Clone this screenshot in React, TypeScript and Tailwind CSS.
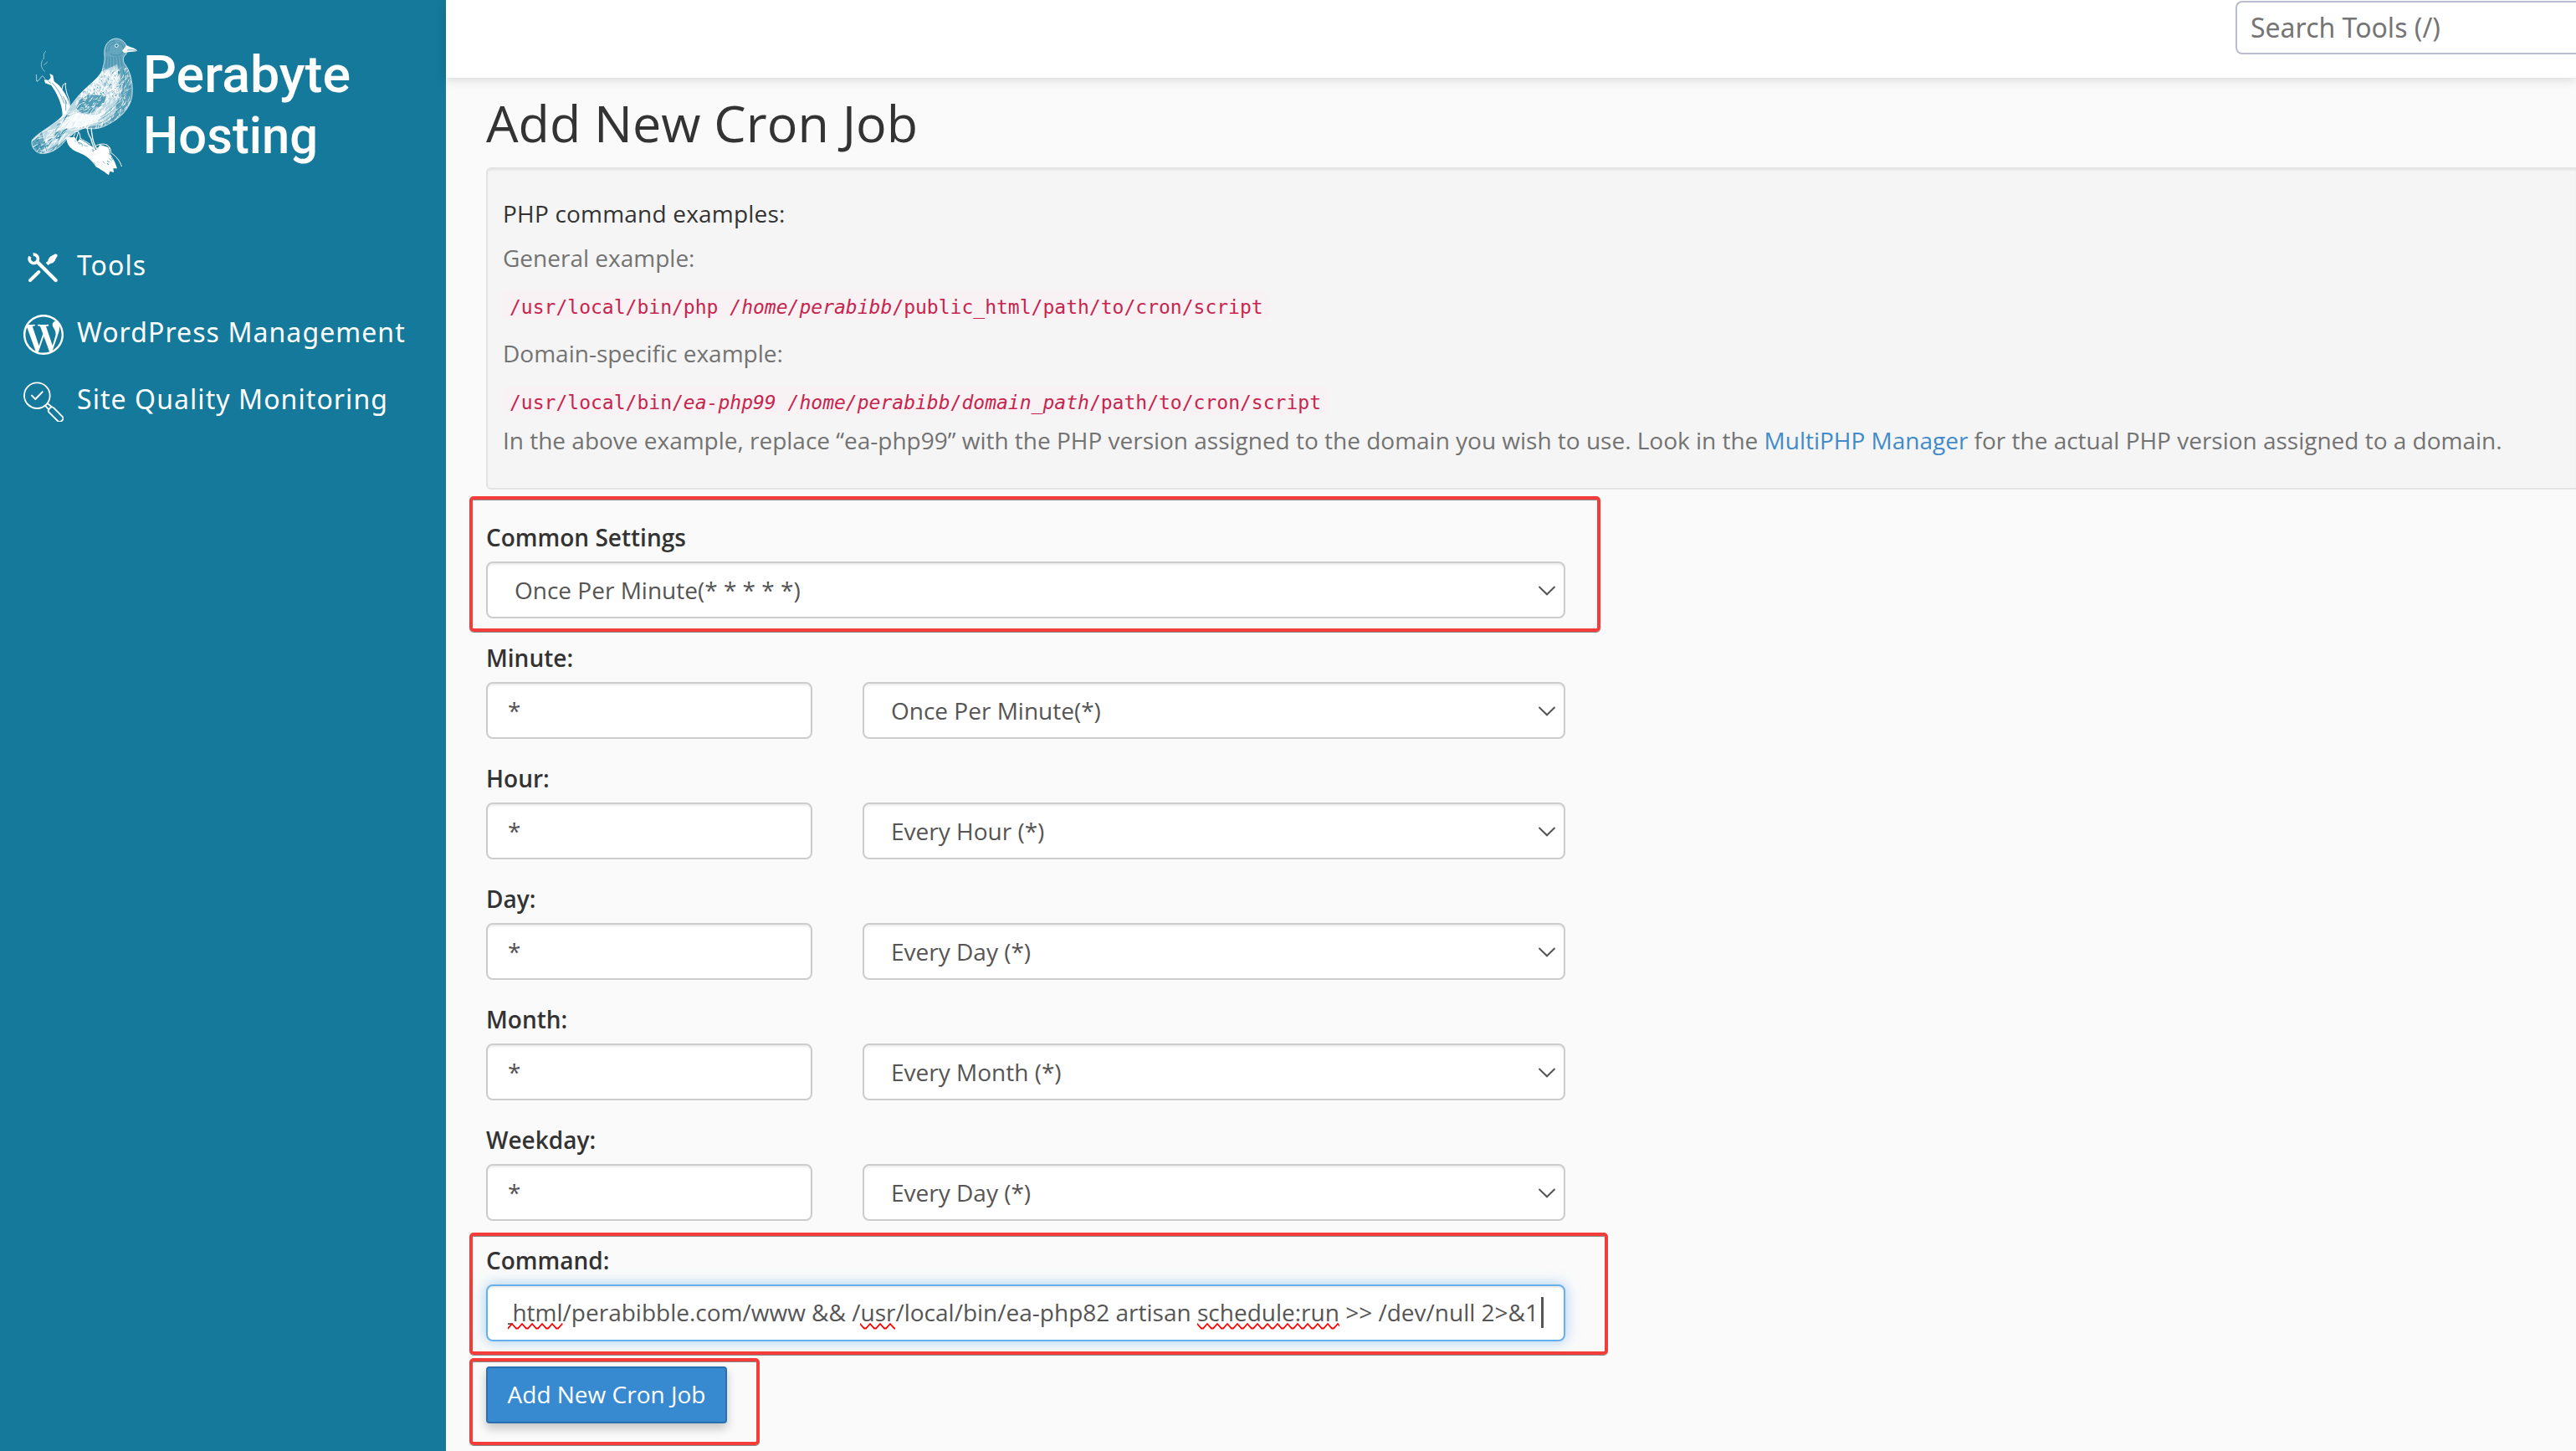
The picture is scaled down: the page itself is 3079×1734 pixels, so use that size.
import type { ReactNode } from "react";
import { SiWordpress } from "react-icons/si";

const BODY =
  "M285 82 C279 44 300 18 328 18 C348 20 360 33 365 47 L363 74 C351 82 350 94 355 106 C376 132 388 172 384 220 C378 270 340 306 290 330 C268 342 240 344 215 339 C190 345 160 365 135 395 C112 420 80 433 55 430 C34 425 21 405 24 385 C35 363 90 337 130 300 C150 275 170 250 190 225 C215 195 260 165 276 135 C280 115 287 100 285 82 Z";
const LOWER_BRANCH =
  "M148 372 C148 398 165 418 190 426 C220 436 240 456 254 478 L282 494 L300 508 L304 494 L318 498 L316 484 L330 484 L322 462 C312 440 304 436 298 408 L268 398 C262 412 256 420 250 418 C244 402 232 404 222 394 L196 378 L188 388 L178 372 Z";
const UPPER_BRANCH =
  "M72 178 L68 164 L84 168 L92 158 L88 144 L100 150 L104 172 L122 186 C143 212 157 236 160 264 L148 288 L134 296 C134 262 122 234 108 208 L94 186 Z";

type Stroke = { d: string; w: number };

function makeRandom(seed: number) {
  let s = seed;
  return () => {
    s = (s * 1664525 + 1013904223) % 4294967296;
    return s / 4294967296;
  };
}

/* Short feather strokes scattered over a rectangle, following one direction. */
function hatch(
  seed: number,
  count: number,
  box: [number, number, number, number],
  angle: number,
  length: number,
): Stroke[] {
  const rnd = makeRandom(seed);
  return Array.from({ length: count }, () => {
    const x = box[0] + rnd() * box[2];
    const y = box[1] + rnd() * box[3];
    const a = angle + (rnd() - 0.5) * 0.9;
    const l = length * (0.4 + rnd());
    const dx = Math.cos(a) * l;
    const dy = Math.sin(a) * l;
    const bend = (rnd() - 0.5) * 6;
    return {
      d: `M${x.toFixed(1)} ${y.toFixed(1)} q${(dx / 2 + bend).toFixed(1)} ${(dy / 2 + bend).toFixed(1)} ${dx.toFixed(1)} ${dy.toFixed(1)}`,
      w: 1.4 + rnd() * 1.8,
    };
  });
}

const chest = hatch(7, 420, [180, 120, 200, 220], 2.2, 15);
const speckle = hatch(19, 420, [200, 130, 140, 100], 1.4, 8);
const tail = hatch(31, 260, [20, 270, 220, 160], 2.45, 24);
const bark = hatch(43, 70, [140, 370, 200, 140], 0.7, 8);

function Strokes({ items, color }: { items: Stroke[]; color: string }) {
  return (
    <g fill="none" stroke={color} strokeLinecap="round">
      {items.map((s, i) => (
        <path key={i} d={s.d} strokeWidth={s.w} />
      ))}
    </g>
  );
}

function Bird() {
  const teal = "#14799b";
  return (
    <svg viewBox="0 0 420 525" className="h-[175px] w-[140px] shrink-0" aria-hidden="true">
      <defs>
        <clipPath id="body">
          <path d={BODY} />
        </clipPath>
        <clipPath id="lower">
          <path d={LOWER_BRANCH} />
        </clipPath>
      </defs>
      <g fill="none" stroke="#fff" strokeLinecap="round">
        <path d="M74 64 C62 74 70 82 66 92 M62 96 C54 112 58 124 70 136 M68 112 C74 108 78 106 80 102" strokeWidth="2" opacity=".8" />
        <path d="M40 148 C42 158 40 166 42 172 C52 170 54 156 62 152 L72 162" strokeWidth="2" />
        <path d="M132 200 L136 184 L146 178 C142 190 148 204 150 216 C158 232 160 246 160 262" strokeWidth="3" />
        <path d="M292 400 C304 404 308 416 308 428 C326 440 340 456 346 476" strokeWidth="3" />
      </g>
      <path d={UPPER_BRANCH} fill="#fff" />
      <g fill="none" stroke={teal} strokeWidth="1.800" strokeLinecap="round">
        <path d="M98 178 C116 196 130 222 140 250 M136 226 L150 252 M146 240 L146 276 M84 172 L92 178" />
      </g>
      <path d={LOWER_BRANCH} fill="#fff" />
      <g clipPath="url(#lower)">
        <Strokes items={bark} color={teal} />
        <path d="M160 385 C190 425 240 420 270 470 L300 495" fill="none" stroke="#fff" strokeWidth="26" opacity=".9" />
      </g>
      <path d="M178 352 C190 346 198 356 198 378 M180 358 L166 386 M192 352 L182 382 M196 374 C208 384 222 388 234 398" fill="none" stroke="#fff" strokeWidth="3" />
      <path d="M222 336 C224 352 228 366 236 376 C240 396 248 414 260 434 M238 338 C236 352 242 364 242 376 C246 396 254 412 268 430" fill="none" stroke="#fff" strokeWidth="4" />
      <path d="M252 404 C266 394 286 394 298 402 C304 410 304 420 300 430 M256 412 C272 406 284 414 290 424" fill="none" stroke="#fff" strokeWidth="3" />
      <g clipPath="url(#body)">
        <path d={BODY} fill="#fff" fillOpacity=".35" />
        <path d="M278 135 C230 180 200 210 172 250 L120 310 L60 350 L70 425 L150 375 L220 336 L300 320 C340 260 340 160 330 110 Z" fill="#fff" fillOpacity=".55" />
        <Strokes items={chest} color="#fff" />
        <Strokes items={hatch(57, 110, [190, 130, 150, 100], 2, 7)} color={teal} />
        <Strokes items={speckle} color="#fff" />
        <path d="M196 238 C220 215 250 218 290 226 C290 246 268 266 240 284 C216 292 192 286 184 266 Z" fill={teal} fillOpacity=".65" />
        <Strokes items={hatch(71, 70, [185, 220, 100, 65], 2.5, 9)} color="#fff" />
        <Strokes items={tail} color="#fff" />
        <Strokes items={hatch(83, 60, [30, 290, 170, 130], 2.4, 22)} color={teal} />
        <path d="M188 284 C220 296 262 294 290 280 L262 318 L200 336 L150 340 L110 352 L150 300 Z" fill="#fff" fillOpacity=".8" />
        <g fill="none" stroke={teal} strokeWidth="1.800" opacity=".8">
          <path d="M372 150 C384 210 360 280 262 324 M362 140 C376 200 350 268 262 312 M352 130 C366 190 342 256 270 300 M378 190 C376 250 340 300 280 326" />
          <path d="M286 84 L280 130 M294 82 L290 124 M303 84 L300 122 M312 84 L312 120 M322 84 L324 118 M332 82 L336 116 M342 80 L348 118" />
          <path d="M292 66 C288 46 300 28 322 26 M300 64 C298 48 308 36 326 34 M306 72 C322 84 344 78 352 66 M336 34 C348 38 354 48 354 60" />
          <path d="M30 384 C42 398 42 416 50 428 M40 376 C54 390 56 410 64 428 M34 402 L60 426 M60 362 L78 424" />
        </g>
      </g>
      <path d={BODY} fill="none" stroke="#fff" strokeWidth="2.500" opacity=".85" />
      <path d="M364 42 C378 50 396 52 402 62 C392 66 376 64 356 70 L348 62 Z" fill="#fff" />
      <path d="M366 60 C380 58 390 60 398 61" fill="none" stroke={teal} strokeWidth="2" />
      <circle cx="328" cy="44" r="5.500" fill={teal} stroke="#fff" strokeWidth="3" />
    </svg>
  );
}

function ToolsIcon() {
  return (
    <svg viewBox="0 0 144 144" className="size-12" fill="none" stroke="#fff" aria-hidden="true">
      <path d="M23.500 32 A15.500 15.500 0 1 0 35 24.500" strokeWidth="11" />
      <path d="M50 51 L116 117" strokeWidth="13" strokeLinecap="round" />
      <path d="M24 117 L55 87" strokeWidth="12" strokeLinecap="round" />
      <path d="M80 54 L89 63 L96 57 C106 57 113 49 116 40 L122 29 C122 24 118 21 112 23 L98 31 C92 36 88 42 88 48 Z" fill="#fff" stroke="none" />
    </svg>
  );
}

function QualityIcon() {
  return (
    <svg viewBox="0 0 144 144" className="size-12" fill="none" stroke="#fff" strokeWidth="5.500" aria-hidden="true">
      <circle cx="49" cy="50" r="46" />
      <path d="M30 50 L43 63 L68 37" strokeWidth="6" strokeLinecap="round" strokeLinejoin="round" />
      <path d="M78 86 L92 102 M86 78 L103 92" />
      <rect x="-31" y="-11.500" width="62" height="23" rx="9" transform="translate(116 118) rotate(45)" />
    </svg>
  );
}

function NavItem({ icon, label }: { icon: ReactNode; label: string }) {
  return (
    <a className="flex h-20 items-center gap-4 pl-7 font-['Noto_Sans'] text-[32px] tracking-[1.070px] text-white">
      <span className="mt-[5px] size-12 shrink-0">{icon}</span>
      <span className="whitespace-nowrap">{label}</span>
    </a>
  );
}

function Highlight({ className }: { className: string }) {
  return (
    <div
      className={
        "pointer-events-none absolute rounded-[5px] border-4 border-[#f43c3b] shadow-[0_1px_0_#8a8a8a,inset_0_1px_0_#8a8a8a] " +
        className
      }
    />
  );
}

function Select({ value }: { value: string }) {
  return (
    <div className="flex h-[68px] flex-1 items-center justify-between rounded-lg border-2 border-[#ccc] bg-white pr-[9px] pl-8 text-[#555] shadow-[inset_0_2px_2px_rgba(0,0,0,0.075)]">
      <span>{value}</span>
      <svg viewBox="0 0 22 14" className="mt-0.5 h-[14px] w-[22px]" fill="none" stroke="#555" strokeWidth="2" aria-hidden="true">
        <path d="M1.500 2 L11 11.300 L20.500 2" />
      </svg>
    </div>
  );
}

function Label({ children }: { children: ReactNode }) {
  return <div className="mb-[9px] h-10 leading-10 font-semibold text-[#333]">{children}</div>;
}

function TimeField({ label, value }: { label: string; value: string }) {
  return (
    <div className="mb-[26px] pt-px">
      <Label>{label}</Label>
      <div className="flex gap-[60px]">
        <div className="flex h-[68px] w-[390px] items-center rounded-lg border-2 border-[#ccc] bg-white px-6 text-[#555] shadow-[inset_0_2px_2px_rgba(0,0,0,0.075)]">
          *
        </div>
        <Select value={value} />
      </div>
    </div>
  );
}

function Misspelled({ id, children }: { id: string; children: ReactNode }) {
  return (
    <span className="relative">
      {children}
      <svg className="absolute -bottom-[2px] left-0 h-2 w-full" aria-hidden="true">
        <defs>
          <pattern id={id} width="12" height="8" patternUnits="userSpaceOnUse">
            <path d="M-1 0 L0 1 L5 6.500 H7 L12 1 L13 0" fill="none" stroke="#f00" strokeWidth="1.800" />
          </pattern>
        </defs>
        <rect width="100%" height="8" fill={`url(#${id})`} />
      </svg>
    </span>
  );
}

function Code({ children }: { children: ReactNode }) {
  return (
    <code className="block h-[34px] w-fit rounded-lg bg-[#f9f2f4] px-2 font-['DejaVu_Sans_Mono'] text-[23.02px] leading-[38px] whitespace-pre text-[#c7254e]">
      {children}
    </code>
  );
}

export default function App() {
  return (
    <div className="flex h-[1734px] w-[3079px] overflow-hidden bg-[#fafafa] font-['Open_Sans',sans-serif] text-[28px] leading-10">
      <aside className="w-[533px] shrink-0 bg-[#14799b]">
        <div className="flex h-[277px] items-start pt-10 pl-[30px]">
          <Bird />
          <svg viewBox="0 0 260 175" className="h-[175px] w-[260px]" fill="#fff" fontFamily="Roboto" fontSize="60.500" fontWeight="500">
            <text x="1" y="70" textLength="248" lengthAdjust="spacingAndGlyphs">Perabyte</text>
            <text x="1" y="142.500" textLength="209" lengthAdjust="spacingAndGlyphs">Hosting</text>
          </svg>
        </div>
        <nav>
          <NavItem icon={<ToolsIcon />} label="Tools" />
          <NavItem icon={<SiWordpress className="size-12" />} label="WordPress Management" />
          <NavItem icon={<QualityIcon />} label="Site Quality Monitoring" />
        </nav>
      </aside>

      <div className="flex min-w-0 flex-1 flex-col">
        <header className="flex h-[93px] shrink-0 items-start justify-end bg-white pt-px shadow-[0_2px_12px_rgba(0,0,0,0.15)]">
          <div className="flex h-16 w-[407px] items-center rounded-l-lg border-2 border-r-0 border-[#babdcd] pl-4 font-['Noto_Sans'] text-[32px] text-[#757575]">
            Search Tools (/)
          </div>
        </header>

        <main className="pt-[14px] pl-12">
          <h1 className="mb-[13px] h-20 text-[61px] leading-[80px] text-[#333]">Add New Cron Job</h1>

          <section className="mb-9 h-[385px] rounded-l-md border-2 border-r-0 border-[#e3e3e3] bg-[#f5f5f5] pt-[33px] pl-[18px] whitespace-nowrap text-[#737373] shadow-[inset_0_2px_2px_rgba(0,0,0,0.05)]">
            <h5 className="mb-[13px] font-medium tracking-[0.200px] text-[#333]">PHP command examples:</h5>
            <p className="mb-5">General example:</p>
            <Code>
              /usr/local/bin/php <i>/home/perabibb</i>/public_html/path/to/cron/script
            </Code>
            <p className="my-5">Domain-specific example:</p>
            <Code>
              /usr/local/bin/<i>ea-php99</i> <i>/home/perabibb</i>/<i>domain_path</i>/path/to/cron/script
            </Code>
            <p className="mt-2.5 tracking-[-0.010px]">
              In the above example, replace “ea-php99” with the PHP version assigned to the domain you wish to use. Look in
              the <a className="text-[#428bca]">MultiPHP Manager</a> for the actual PHP version assigned to a domain.
            </p>
          </section>

          <form className="w-[1290px]">
            <div className="relative mb-[26px] pt-px">
              <Label>Common Settings</Label>
              <div className="flex">
                <Select value="Once Per Minute(* * * * *)" />
              </div>
              <Highlight className="-top-7 -left-5 h-[162px] w-[1352px]" />
            </div>

            <TimeField label="Minute:" value="Once Per Minute(*)" />
            <TimeField label="Hour:" value="Every Hour (*)" />
            <TimeField label="Day:" value="Every Day (*)" />
            <TimeField label="Month:" value="Every Month (*)" />
            <TimeField label="Weekday:" value="Every Day (*)" />

            <div className="relative mb-[30px] pt-px">
              <Label>Command:</Label>
              <div className="flex h-[68px] items-center rounded-lg border-2 border-[#66afe9] bg-white px-6 text-[#555] shadow-[inset_0_2px_2px_rgba(0,0,0,0.075),0_0_16px_rgba(102,175,233,0.6)]">
                <div className="flex w-full items-center justify-end overflow-hidden pb-0.5 whitespace-nowrap">
                  <span>
                    <Misspelled id="wave-html">_html</Misspelled>/perabibble.com/www &amp;&amp; /
                    <Misspelled id="wave-usr">usr</Misspelled>/local/bin/ea-php82 artisan{" "}
                    <Misspelled id="wave-run">schedule:run</Misspelled> &gt;&gt; /dev/null 2&gt;&amp;1
                  </span>
                  <span className="ml-[3px] h-[37px] w-[3px] shrink-0 bg-[#555]" />
                </div>
              </div>
              <Highlight className="-top-3 -left-5 h-[146px] w-[1361px]" />
            </div>

            <div className="relative w-[288px]">
              <button
                type="button"
                className="h-[68px] w-full rounded border-2 border-[#2a70b1] bg-[#388ad0] pb-0.5 text-white shadow-[0_6px_12px_rgba(0,0,0,0.22)]"
              >
                Add New Cron Job
              </button>
              <Highlight className="-top-2.5 -left-5 h-[104px] w-[347px]" />
            </div>
          </form>
        </main>
      </div>
    </div>
  );
}
